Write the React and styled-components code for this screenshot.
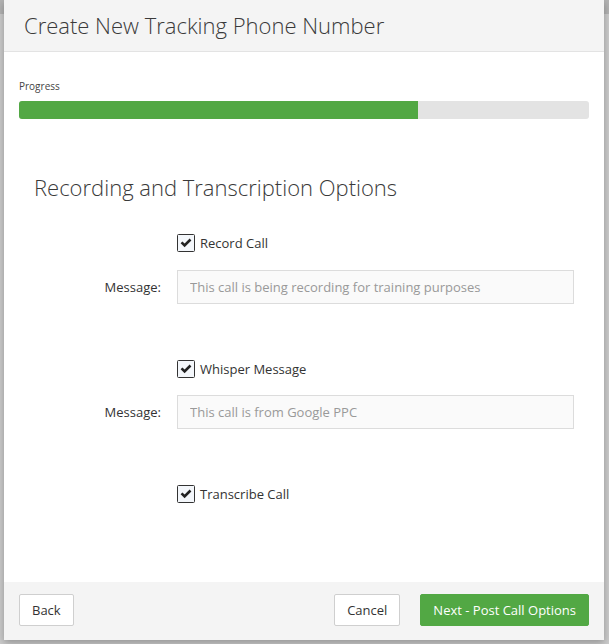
import React from "react";
import styled, { createGlobalStyle } from "styled-components";

const Global = createGlobalStyle`
  html, body { margin: 0; padding: 0; }
  body {
    background: #cbcbcb;
    font-family: "Open Sans", "Liberation Sans", sans-serif;
    color: #333;
    width: 609px;
    height: 644px;
    overflow: hidden;
  }
  * { box-sizing: border-box; }
`;

const Backdrop = styled.div`
  width: 609px;
  height: 644px;
  padding: 0 5px 0 4px;
  background: linear-gradient(#b3b3b3 0 14px, #cccccc 14px);
`;

const Modal = styled.div`
  width: 600px;
  height: 640px;
  background: #fff;
  display: flex;
  flex-direction: column;
  box-shadow: 0 3px 8px rgba(0, 0, 0, 0.28);
`;

const Header = styled.div`
  height: 52px;
  flex: none;
  background: #f4f4f4;
  border-bottom: 1px solid #e3e3e3;
  display: flex;
  align-items: center;
  padding: 0 0 1px 20px;
`;

const Title = styled.h4`
  margin: 0;
  font-weight: 300;
  font-size: 22px;
  color: #3a3a3a;
`;

const Body = styled.div`
  flex: 1;
  padding: 27px 15px 0;
`;

const ProgressLabel = styled.div`
  font-size: 10px;
  line-height: 14px;
  color: #444;
  margin-bottom: 8px;
`;

const Track = styled.div`
  height: 18px;
  background: #e3e3e3;
  border-radius: 3px;
  overflow: hidden;
`;

const Fill = styled.div`
  height: 100%;
  background: #52a844;
`;

const SectionTitle = styled.h3`
  margin: 55px 0 0 15px;
  font-weight: 300;
  font-size: 22px;
  line-height: 26px;
  color: #3a3a3a;
`;

const Form = styled.div`
  display: grid;
  grid-template-columns: 142px 397px;
  column-gap: 16px;
  align-items: center;
`;

const Label = styled.label`
  grid-column: 1;
  text-align: right;
  font-size: 13px;
  line-height: 18px;
  color: #333;
  margin-top: ${(p) => p.$mt}px;
`;

const CheckRow = styled.label`
  grid-column: 2;
  display: flex;
  align-items: center;
  gap: 5px;
  height: 18px;
  font-size: 13px;
  line-height: 18px;
  color: #333;
  margin-top: ${(p) => p.$mt}px;
`;

const Input = styled.input`
  grid-column: 2;
  height: 34px;
  border: 1px solid #dcdcdc;
  background: #fafafa;
  padding: 0 12px;
  font-family: inherit;
  font-size: 13px;
  color: #555;
  margin-top: ${(p) => p.$mt}px;
  &::placeholder { color: #999; }
`;

const Box = styled.svg`
  flex: none;
  display: block;
`;

const Footer = styled.div`
  flex: none;
  height: 58px;
  background: #f4f4f4;
  display: flex;
  align-items: flex-start;
  padding: 12px 15px 0;
`;

const Button = styled.button`
  height: 32px;
  padding: 0 12px;
  font-family: inherit;
  font-size: 13px;
  border-radius: 2px;
  border: 1px solid ${(p) => (p.$primary ? "#52a844" : "#cfcfcf")};
  background: ${(p) => (p.$primary ? "#52a844" : "#fff")};
  color: ${(p) => (p.$primary ? "#fff" : "#333")};
  font-weight: 400;
  margin-left: ${(p) => p.$ml || 0};
`;

const Check = ({ children, mt }) => (
  <CheckRow $mt={mt}>
    <Box width="18" height="18" viewBox="0 0 18 18">
      <rect x="0.5" y="0.5" width="17" height="17" rx="1" fill="#f4f7fb" stroke="#333" />
      <path d="M3.6 9.2 L5.4 7.4 L7.6 9.6 L12.6 4.6 L14.4 6.4 L7.6 13.2 Z" fill="#222" />
    </Box>
    {children}
  </CheckRow>
);

export default function App() {
  return (
    <>
      <Global />
      <Backdrop>
        <Modal>
          <Header>
            <Title>Create New Tracking Phone Number</Title>
          </Header>
          <Body>
            <ProgressLabel>Progress</ProgressLabel>
            <Track>
              <Fill style={{ width: "70%" }} />
            </Track>
            <SectionTitle>Recording and Transcription Options</SectionTitle>
            <Form>
              <Check mt={34}>Record Call</Check>
              <Label $mt={18}>Message:</Label>
              <Input $mt={18} placeholder="This call is being recording for training purposes" />
              <Check mt={56}>Whisper Message</Check>
              <Label $mt={17}>Message:</Label>
              <Input $mt={17} placeholder="This call is from Google PPC" />
              <Check mt={56}>Transcribe Call</Check>
            </Form>
          </Body>
          <Footer>
            <Button>Back</Button>
            <Button $ml="auto">Cancel</Button>
            <Button $primary $ml="20px">Next - Post Call Options</Button>
          </Footer>
        </Modal>
      </Backdrop>
    </>
  );
}
